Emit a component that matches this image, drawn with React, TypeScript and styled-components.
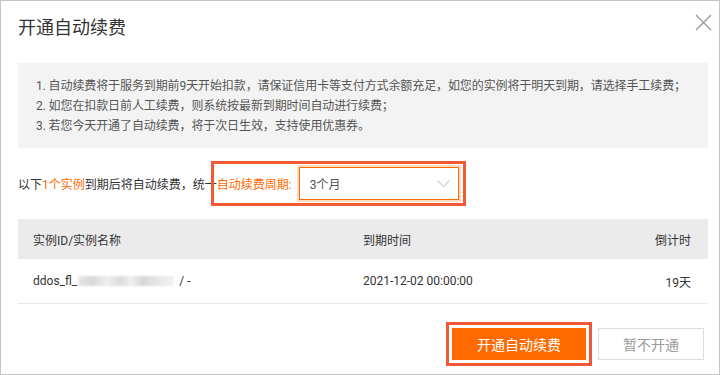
import React from 'react';
import styled, { createGlobalStyle } from 'styled-components';

const GlobalStyle = createGlobalStyle`
  html, body {
    margin: 0;
    padding: 0;
    background: #fff;
  }
  body {
    font-family: Roboto, "Noto Sans CJK SC", sans-serif;
    color: #333;
  }
`;

const Dialog = styled.div`
  width: 720px;
  height: 375px;
  box-sizing: border-box;
  border: 1px solid #c4c4c4;
  background: #fff;
  display: flex;
  flex-direction: column;
`;

const Header = styled.div`
  height: 62px;
  box-sizing: border-box;
  display: flex;
  justify-content: space-between;
  align-items: flex-start;
  padding: 12px 7px 0 17px;
`;

const Title = styled.div`
  font-size: 18px;
  line-height: 30px;
  color: #333;
`;

const CloseButton = styled.button`
  border: 0;
  background: none;
  padding: 0;
  margin-top: 1px;
  width: 17px;
  height: 17px;
  cursor: pointer;
  display: flex;

  svg {
    width: 17px;
    height: 17px;
  }
`;

const Body = styled.div`
  padding: 0 11px 0 17px;
  display: flex;
  flex-direction: column;
`;

const Notice = styled.ol`
  margin: 0;
  padding: 13px 18px 12px;
  list-style: none;
  background: #f3f3f3;
  font-size: 12px;
  line-height: 20px;
  color: #555;
  white-space: nowrap;
  letter-spacing: -0.1px;
`;

const RenewRow = styled.div`
  margin-top: 13px;
  display: flex;
  align-items: center;
  font-size: 12px;
  color: #333;
`;

const Highlight = styled.span`
  color: #ff6a00;
`;

const Mark = styled.div<{ $pad: string }>`
  display: inline-flex;
  align-items: center;
  border: 3px solid #f25a36;
  padding: ${p => p.$pad};
`;

const PeriodMark = styled(Mark)`
  height: 45px;
  box-sizing: border-box;
  margin-left: -6px;
`;

const PeriodLabel = styled.span`
  color: #ff6a00;
  margin-right: 7px;
`;

const Select = styled.div`
  width: 160px;
  height: 33px;
  box-sizing: border-box;
  border: 1px solid #ff6a00;
  box-shadow: 0 0 0 2px #ffdcc2;
  display: flex;
  align-items: center;
  justify-content: space-between;
  padding: 0 8px 0 10px;
  font-size: 12px;
  color: #555;

  svg {
    width: 13px;
    height: 8px;
  }
`;

const Table = styled.div`
  margin-top: 13px;
  font-size: 12px;
`;

const Row = styled.div<{ $head?: boolean }>`
  display: grid;
  grid-template-columns: 330px 1fr 120px;
  align-items: center;
  height: ${p => (p.$head ? '40px' : '44px')};
  padding: 0 17px 0 15px;
  background: ${p => (p.$head ? '#ebebeb' : '#fff')};
  border-bottom: ${p => (p.$head ? '0' : '1px solid #e8e8e8')};
  color: #333;
`;

const Cell = styled.div<{ $right?: boolean }>`
  text-align: ${p => (p.$right ? 'right' : 'left')};
  white-space: nowrap;
`;

const Masked = styled.span`
  display: inline-block;
  width: 96px;
  height: 10px;
  margin: 0 5px 0 1px;
  vertical-align: -1px;
  background: linear-gradient(90deg, #e6e6e6 0%, #d8d8d8 15%, #eeeeee 30%, #dcdcdc 45%, #f0f0f0 55%, #d6d6d6 68%, #e4e4e4 80%, #f2f2f2 100%);
  filter: blur(1px);
`;

const Footer = styled.div`
  margin-top: 18px;
  display: flex;
  justify-content: flex-end;
  align-items: center;
  padding-right: 15px;
`;

const Button = styled.button<{ $primary?: boolean }>`
  height: 32px;
  box-sizing: border-box;
  font-family: Roboto, "Noto Sans CJK SC", sans-serif;
  font-size: 14px;
  cursor: pointer;
  border: 1px solid ${p => (p.$primary ? '#ff6a00' : '#dcdcdc')};
  background: ${p => (p.$primary ? '#ff6a00' : '#fff')};
  color: ${p => (p.$primary ? '#fff' : '#999')};
  width: ${p => (p.$primary ? '134px' : '106px')};
  padding: 0;
`;

const SecondaryButton = styled(Button)`
  margin-left: 6px;
`;

export default function App() {
  return (
    <>
      <GlobalStyle />
      <Dialog>
        <Header>
          <Title>开通自动续费</Title>
          <CloseButton aria-label="close">
            <svg viewBox="0 0 17 17">
              <path d="M1 1 L16 16 M16 1 L1 16" stroke="#9a9a9a" strokeWidth="1.4" fill="none" />
            </svg>
          </CloseButton>
        </Header>
        <Body>
          <Notice>
            <li>1. 自动续费将于服务到期前9天开始扣款，请保证信用卡等支付方式余额充足，如您的实例将于明天到期，请选择手工续费；</li>
            <li>2. 如您在扣款日前人工续费，则系统按最新到期时间自动进行续费；</li>
            <li>3. 若您今天开通了自动续费，将于次日生效，支持使用优惠券。</li>
          </Notice>
          <RenewRow>
            <span>
              以下<Highlight>1个实例</Highlight>到期后将自动续费，统一
            </span>
            <PeriodMark $pad="0 4px 0 3px">
              <PeriodLabel>自动续费周期:</PeriodLabel>
              <Select>
                <span>3个月</span>
                <svg viewBox="0 0 13 8">
                  <path d="M0.5 0.5 L6.5 6.5 L12.5 0.5" stroke="#cfcfcf" strokeWidth="1.2" fill="none" />
                </svg>
              </Select>
            </PeriodMark>
          </RenewRow>
          <Table>
            <Row $head>
              <Cell>实例ID/实例名称</Cell>
              <Cell>到期时间</Cell>
              <Cell $right>倒计时</Cell>
            </Row>
            <Row>
              <Cell>
                ddos_fl_<Masked />/ -
              </Cell>
              <Cell>2021-12-02 00:00:00</Cell>
              <Cell $right>19天</Cell>
            </Row>
          </Table>
        </Body>
        <Footer>
          <Mark $pad="3px">
            <Button $primary>开通自动续费</Button>
          </Mark>
          <SecondaryButton>暂不开通</SecondaryButton>
        </Footer>
      </Dialog>
    </>
  );
}
